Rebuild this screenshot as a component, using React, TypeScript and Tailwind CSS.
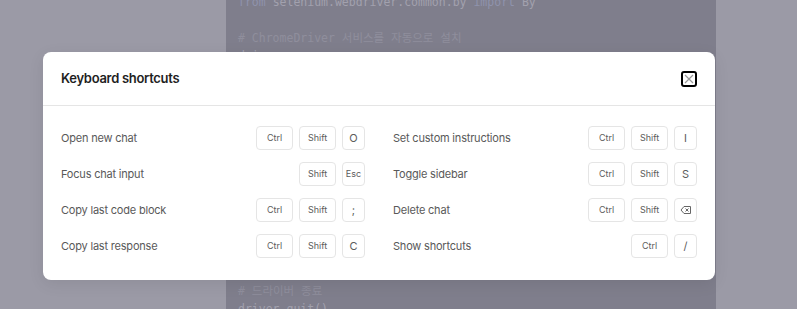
const shortcutsLeft = [
  { label: "Open new chat", keys: ["Ctrl", "Shift", "O"] },
  { label: "Focus chat input", keys: ["Shift", "Esc"] },
  { label: "Copy last code block", keys: ["Ctrl", "Shift", ";"] },
  { label: "Copy last response", keys: ["Ctrl", "Shift", "C"] },
]

const shortcutsRight = [
  { label: "Set custom instructions", keys: ["Ctrl", "Shift", "I"] },
  { label: "Toggle sidebar", keys: ["Ctrl", "Shift", "S"] },
  { label: "Delete chat", keys: ["Ctrl", "Shift", "⌫"] },
  { label: "Show shortcuts", keys: ["Ctrl", "/"] },
]

const Key = ({ k }: { k: string }) => {
  const wide = k.length > 1 && k !== "Esc"
  return (
    <span
      className={`flex h-6 items-center justify-center rounded-[4px] border border-[#e5e5e5] bg-white font-normal text-[#5c5c5c] ${
        wide ? "w-[37px] text-[9px]" : k === "Esc" ? "w-[23px] text-[9px]" : "w-[23px] text-[11px]"
      }`}
    >
      {k === "⌫" ? (
        <svg width="12" height="10" viewBox="0 0 12 10" fill="none" stroke="#666" strokeWidth="1">
          <path d="M4 1.5h6.5v7H4L1 5z" />
          <path d="M5.5 3.5l3 3M8.5 3.5l-3 3" />
        </svg>
      ) : (
        k
      )}
    </span>
  )
}

const Row = ({ label, keys }: { label: string; keys: string[] }) => (
  <div className="flex h-6 items-center justify-between">
    <span className="text-[11px] tracking-[-0.2px] text-[#595959]">{label}</span>
    <div className="flex gap-[6px]">
      {keys.map((k) => (
        <Key key={k} k={k} />
      ))}
    </div>
  </div>
)

export default function App() {
  return (
    <div className="relative h-[309px] w-[797px] overflow-hidden bg-[#9b9aa6] font-['Inter',sans-serif]">
      <div className="ml-[226px] flex h-full w-[490px] flex-col justify-between bg-[#7f7e8c] px-3 font-['DejaVu_Sans_Mono','Noto_Sans_CJK_KR',monospace] text-[11.5px] leading-[18px] text-[#a2a1ae]">
        <div className="-mt-[7px]">
          <div>
            <span className="text-[#8f93ad]">from</span> selenium.webdriver.common.by{" "}
            <span className="text-[#8f93ad]">import</span> By
          </div>
          <div>&nbsp;</div>
          <div className="text-[#8f8e9c]"># ChromeDriver 서비스를 자동으로 설치</div>
          <div>driver = webdriver.Chrome(service=Service(ChromeDriverManager().install()))</div>
        </div>
        <div className="-mb-[9px]">
          <div className="text-[#8f8e9c]"># 드라이버 종료</div>
          <div>driver.quit()</div>
        </div>
      </div>

      <div className="absolute left-[43px] top-[52px] w-[672px] rounded-lg bg-white shadow-[0_4px_16px_rgba(0,0,0,0.08)]">
        <div className="flex h-[54px] items-center justify-between border-b border-[#e5e5e5] px-[18px]">
          <h2 className="text-[13px] font-semibold tracking-[-0.3px] text-[#1f1f1f]">Keyboard shortcuts</h2>
          <button className="flex h-4 w-4 items-center justify-center rounded-[3px] border-2 border-black">
            <svg width="10" height="10" viewBox="0 0 10 10" stroke="#9a9a9a" strokeWidth="1.2">
              <path d="M1 1l8 8M9 1l-8 8" />
            </svg>
          </button>
        </div>
        <div className="grid grid-cols-2 gap-x-[28px] px-[18px] pb-[22px] pt-5">
          <div className="flex flex-col gap-3">
            {shortcutsLeft.map((s) => (
              <Row key={s.label} {...s} />
            ))}
          </div>
          <div className="flex flex-col gap-3">
            {shortcutsRight.map((s) => (
              <Row key={s.label} {...s} />
            ))}
          </div>
        </div>
      </div>
    </div>
  )
}
